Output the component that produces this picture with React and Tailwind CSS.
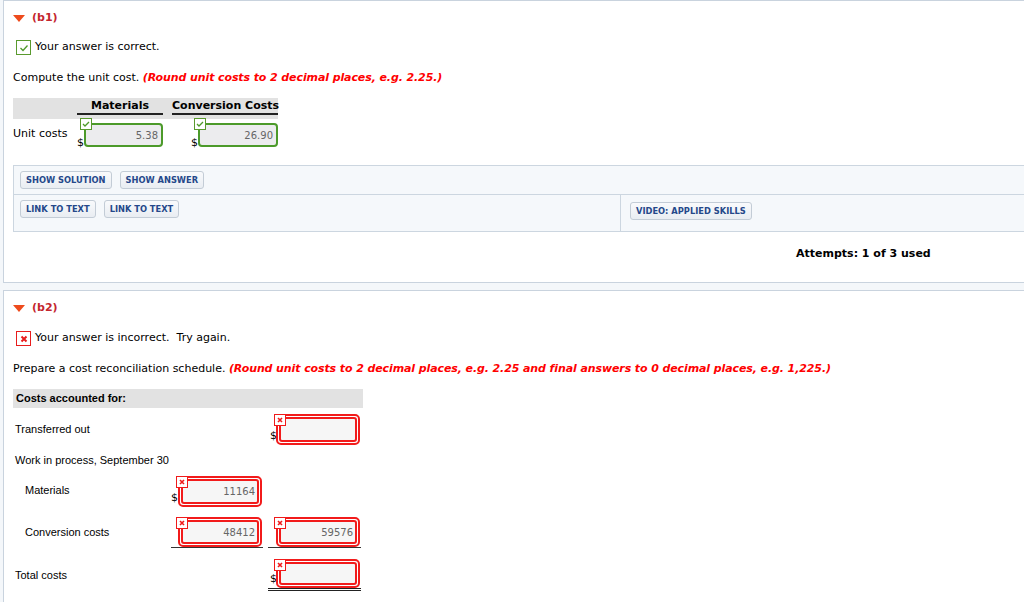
import React from "react";

const sans = "font-['DejaVu_Sans','Verdana',sans-serif]";
const narrow = "font-['Liberation_Sans','Tahoma',sans-serif]";

function Triangle() {
  return (
    <svg width="12" height="7" viewBox="0 0 12 7" className="block">
      <polygon points="0,0 12,0 6,7" fill="#ee4b1c" />
    </svg>
  );
}

function Heading({ label }) {
  return (
    <div className="flex items-center h-[14px] gap-[7px]">
      <Triangle />
      <span className={`${sans} text-[11px] font-bold text-[#c4262e] leading-[14px]`}>{label}</span>
    </div>
  );
}

function StatusBox({ ok }) {
  return ok ? (
    <div className="w-[15px] h-[15px] border border-[#5a9a2e] bg-white flex items-center justify-center ml-[3px]">
      <svg width="10" height="8" viewBox="0 0 10 8">
        <path d="M1.5 4 L4 6.5 L8.5 1.5" stroke="#4f9a2a" strokeWidth="1.3" fill="none" />
      </svg>
    </div>
  ) : (
    <div className="w-[15px] h-[15px] border border-[#e81c1c] bg-white flex items-center justify-center ml-[3px]">
      <svg width="8" height="8" viewBox="0 0 8 8">
        <path d="M1.5 1.5 L6.5 6.5 M6.5 1.5 L1.5 6.5" stroke="#e81c1c" strokeWidth="2" fill="none" />
      </svg>
    </div>
  );
}

function GreenBadge() {
  return (
    <div className="absolute -left-[6px] -top-[7px] w-[12px] h-[12px] bg-white border border-[#5a9a2e] flex items-center justify-center">
      <svg width="8" height="6" viewBox="0 0 8 6">
        <path d="M1 3 L3 5 L7 1" stroke="#4f9a2a" strokeWidth="1.3" fill="none" />
      </svg>
    </div>
  );
}

function RedBadge() {
  return (
    <div className="absolute -left-[4px] -top-[2px] w-[12px] h-[12px] bg-white border border-[#f01a1a] flex items-center justify-center z-10">
      <svg width="6" height="6" viewBox="0 0 6 6">
        <path d="M1 1 L5 5 M5 1 L1 5" stroke="#f01a1a" strokeWidth="1.6" fill="none" />
      </svg>
    </div>
  );
}

function GreenInput({ value }) {
  return (
    <div className="flex items-end justify-end">
      <span className={`${sans} text-[11px] text-black leading-none mb-[-1px]`}>$</span>
      <div className="relative w-[80px] h-[24px] border-2 border-[#4c9a2a] rounded-[4px] bg-[#ececee] flex items-center justify-end pr-[3px]">
        <GreenBadge />
        <span className={`${sans} text-[10px] text-[#666]`}>{value}</span>
      </div>
    </div>
  );
}

function RedInput({ value, width, h = "h-[31px]" }) {
  return (
    <div className={`relative ${width} ${h} border-2 border-[#f21b1b] rounded-[5px] p-px bg-white`}>
      <RedBadge />
      <div className="h-full w-full border-2 border-[#f21b1b] rounded-[3px] bg-[#f6f6f6] flex items-center justify-end pr-[2px]">
        <span className={`${sans} text-[10px] text-[#666]`}>{value}</span>
      </div>
    </div>
  );
}

function Btn({ children }) {
  return (
    <div className={`${sans} h-[18px] px-[5px] flex items-center rounded-[3px] border border-[#c3ccd6] bg-gradient-to-b from-[#f9fafc] to-[#e9edf2] text-[8.3px] font-bold text-[#25488a] whitespace-nowrap`}>
      {children}
    </div>
  );
}

function Dollar() {
  return <span className={`${sans} text-[11px] text-black leading-none mb-[-2px]`}>$</span>;
}

export default function App() {
  return (
    <div className="min-h-screen bg-[#f4f7fa] pl-[3px] overflow-hidden">
      {/* part b1 */}
      <div className="h-[283px] bg-white border border-r-0 border-[#c9d3de] pl-[9px]">
        <div className="mt-[10px]">
          <Heading label="(b1)" />
        </div>
        <div className="mt-[15px] flex items-center gap-[4px] h-[15px]">
          <StatusBox ok />
          <span className={`${sans} text-[11px] text-black`}>Your answer is correct.</span>
        </div>
        <div className={`${sans} mt-[16px] text-[11px] leading-[14px] text-black`}>
          Compute the unit cost.{" "}
          <span className="font-bold italic text-[#f00] tracking-[-0.1px]">(Round unit costs to 2 decimal places, e.g. 2.25.)</span>
        </div>
        <div className="mt-[13px] w-[265px]">
          <div className="flex h-[21px] bg-[#e2e2e2] items-end pb-[4px]">
            <div className="w-[64px]" />
            <div className={`${sans} w-[86px] text-center text-[11px] font-bold leading-[14px] border-b-2 border-[#222]`}>Materials</div>
            <div className="w-[9px]" />
            <div className={`${sans} w-[106px] text-center text-[11px] font-bold leading-[14px] border-b-2 border-[#222] whitespace-nowrap`}>Conversion Costs</div>
          </div>
          <div className="flex h-[30px] items-start">
            <div className={`${sans} w-[64px] text-[11px] leading-[14px] pt-[8px]`}>Unit costs</div>
            <div className="w-[86px] pt-[4px]">
              <GreenInput value="5.38" />
            </div>
            <div className="w-[9px]" />
            <div className="w-[106px] pt-[4px]">
              <GreenInput value="26.90" />
            </div>
          </div>
        </div>
        <div className="mt-[16px] border border-r-0 border-[#ccd6e0] bg-[#f5f8fb]">
          <div className="h-[29px] flex items-center gap-[8px] pl-[6px] border-b border-[#ccd6e0]">
            <Btn>SHOW SOLUTION</Btn>
            <Btn>SHOW ANSWER</Btn>
          </div>
          <div className="h-[36px] flex">
            <div className="w-[607px] border-r border-[#ccd6e0] flex items-start gap-[8px] pl-[6px] pt-[5px]">
              <Btn>LINK TO TEXT</Btn>
              <Btn>LINK TO TEXT</Btn>
            </div>
            <div className="pl-[9px] pt-[7px]">
              <Btn>VIDEO: APPLIED SKILLS</Btn>
            </div>
          </div>
        </div>
        <div className={`${sans} mt-[15px] pl-[783px] text-[11px] font-bold leading-[14px] whitespace-nowrap`}>
          Attempts: 1 of 3 used
        </div>
      </div>

      {/* part b2 */}
      <div className="mt-[7px] h-[330px] bg-white border border-r-0 border-b-0 border-[#c9d3de] pl-[9px]">
        <div className="mt-[10px]">
          <Heading label="(b2)" />
        </div>
        <div className="mt-[16px] flex items-center gap-[4px] h-[15px]">
          <StatusBox ok={false} />
          <span className={`${sans} text-[11px] text-black whitespace-pre`}>Your answer is incorrect.  Try again.</span>
        </div>
        <div className={`${sans} mt-[16px] text-[11px] leading-[14px] text-black whitespace-nowrap`}>
          Prepare a cost reconciliation schedule.{" "}
          <span className="font-bold italic text-[#f00] tracking-[-0.1px]">
            (Round unit costs to 2 decimal places, e.g. 2.25 and final answers to 0 decimal places, e.g. 1,225.)
          </span>
        </div>
        <div className="mt-[13px] w-[350px]">
          <div className={`${narrow} h-[19px] bg-[#e2e2e2] pl-[3px] flex items-center text-[11px] font-bold`}>
            Costs accounted for:
          </div>

          {/* Transferred out */}
          <div className="flex h-[40px] items-start">
            <div className={`${narrow} w-[158px] pl-[2px] pt-[14px] text-[11px] leading-[14px]`}>Transferred out</div>
            <div className="w-[92px]" />
            <div className="w-[5px]" />
            <div className="w-[93px] pl-[2px] pt-[6px] flex items-end">
              <span className="w-[6px]"><Dollar /></span>
              <RedInput value="" width="w-[84px]" />
            </div>
          </div>

          {/* WIP */}
          <div className="h-[22px]">
            <div className={`${narrow} pl-[2px] pt-[5px] text-[11px] leading-[14px]`}>Work in process, September 30</div>
          </div>

          {/* Materials */}
          <div className="flex h-[42px] items-start">
            <div className={`${narrow} w-[158px] pl-[12px] pt-[13px] text-[11px] leading-[14px]`}>Materials</div>
            <div className="w-[92px] pt-[6px] flex items-end">
              <span className="w-[7px]"><Dollar /></span>
              <RedInput value="11164" width="w-[84px]" />
            </div>
          </div>

          {/* Conversion costs */}
          <div className="flex h-[40px] items-start">
            <div className={`${narrow} w-[158px] pl-[12px] pt-[13px] text-[11px] leading-[14px]`}>Conversion costs</div>
            <div className="w-[92px] pt-[5px] pl-[7px] border-b border-[#333]">
              <RedInput value="48412" width="w-[84px]" h="h-[30px]" />
            </div>
            <div className="w-[5px]" />
            <div className="w-[93px] pt-[5px] pl-[8px] border-b border-[#333]">
              <RedInput value="59576" width="w-[84px]" h="h-[30px]" />
            </div>
          </div>

          {/* Total */}
          <div className="flex items-start">
            <div className={`${narrow} w-[158px] pl-[2px] pt-[16px] text-[11px] leading-[14px]`}>Total costs</div>
            <div className="w-[92px]" />
            <div className="w-[5px]" />
            <div className="w-[93px] pl-[2px] pt-[7px] flex items-end border-b-[3px] border-double border-[#222]">
              <span className="w-[6px]"><Dollar /></span>
              <RedInput value="" width="w-[84px]" h="h-[29px]" />
            </div>
          </div>
        </div>
      </div>
    </div>
  );
}
